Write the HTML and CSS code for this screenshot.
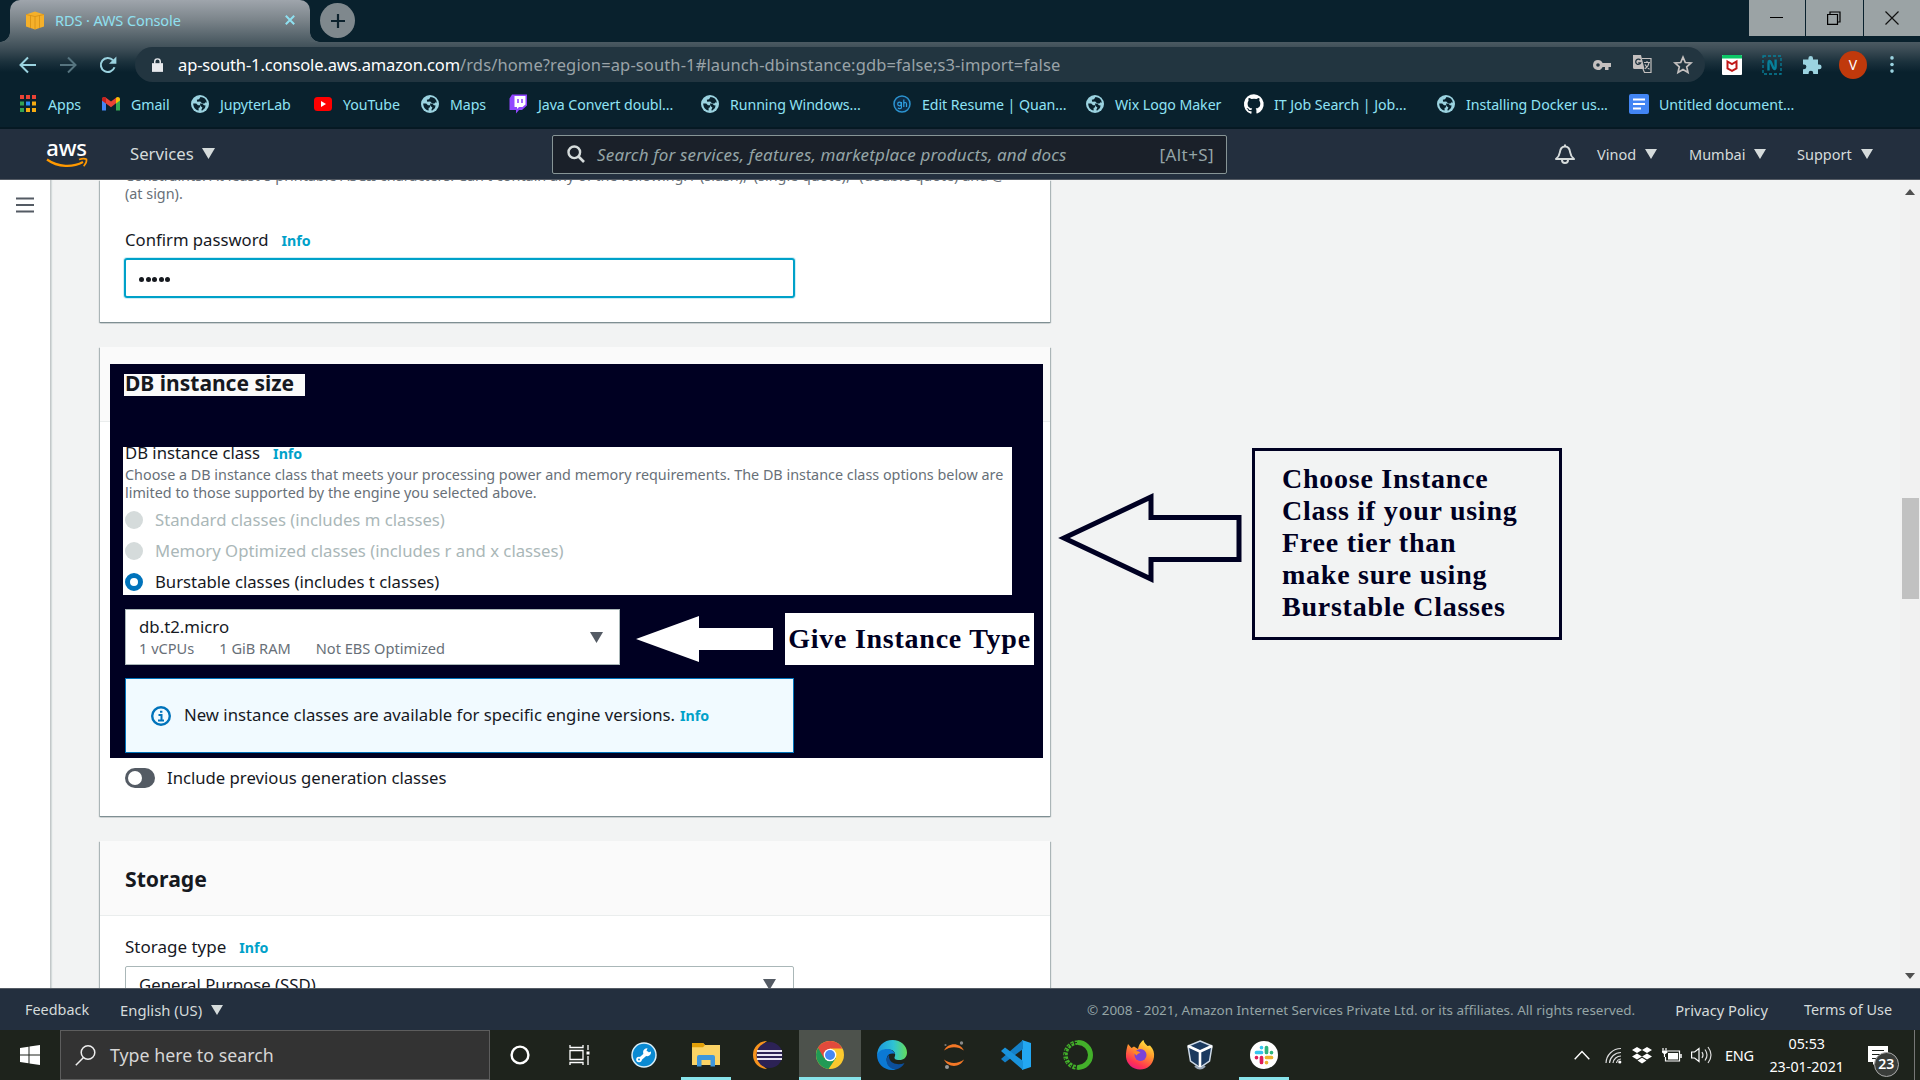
FILE: index.html
```html
<!DOCTYPE html>
<html lang="en">
<head>
<meta charset="utf-8">
<title>RDS · AWS Console</title>
<link rel="stylesheet" href="styles.css">
</head>
<body>
<svg class="defs" width="0" height="0">
  <symbol id="globe" viewBox="0 0 18 18">
    <circle cx="9" cy="9" r="9" fill="#9bd3e0"/>
    <path d="M2.200 8.600h3l1.800 1.600h2v2l-1.400.8v2.600C4.400 15 2.200 12.200 2.200 8.600zM9.500 2.100 8 4.200l-2.200.6.400 2 3-.2 2 1.800h2.200l1.200-1.200 1.300.6A6.900 6.900 0 0 0 9.500 2.100z" fill="#09212d"/>
    <path d="M9 8.600l2.400.2 1.600 1.400 1.600.4-.6 2.400-2.600 2.400-1.200-.2 1.200-2.800-2-1.400z" fill="#09212d"/>
  </symbol>
  <symbol id="caret" viewBox="0 0 12 10"><path d="M0 0h12L6 10z" fill="currentColor"/></symbol>
</svg>

<div class="tabstrip">
  <div class="tab">
    <svg class="tab-icon" viewBox="0 0 18 19"><path d="M0 3.500 9 .5l9 3v12L9 18.500l-9-3z" fill="#f5b02a"/><path d="M0 3.500 9 5.500l9-2M9 5.500v13M4.500 4.500v12.500M13.500 4.500v12.500" stroke="#d58f14" stroke-width=".8" fill="none"/></svg>
    <span class="tab-title">RDS · AWS Console</span>
    <svg class="tab-close" viewBox="0 0 10 10"><path d="M.8.8l8.400 8.400M9.200.8.8 9.200" stroke="#8fe0f0" stroke-width="2"/></svg>
  </div>
  <div class="newtab"><svg width="16" height="16" viewBox="0 0 16 16"><path d="M8 1v14M1 8h14" stroke="#0d222d" stroke-width="2.200"/></svg></div>
  <div class="winbtns">
    <div class="winbtn"><svg width="13" height="13"><path d="M0 5.500h13" stroke="#000" stroke-width="1"/></svg></div>
    <div class="winbtn"><svg width="14" height="14"><path d="M.6 3.500h9.900v9.900H.6zM3 3.500V1h10v10h-2.500" fill="none" stroke="#000" stroke-width="1.200"/></svg></div>
    <div class="winbtn"><svg width="14" height="14"><path d="M.5.5l13 13M13.500.5l-13 13" stroke="#111" stroke-width="1.200"/></svg></div>
  </div>
</div>

<div class="toolbar">
  <svg class="nav" viewBox="0 0 18 18"><path d="M17 9H2M9 1.500 1.500 9 9 16.500" stroke="#9bd3e0" stroke-width="2" fill="none"/></svg>
  <svg class="nav" viewBox="0 0 18 18"><path d="M1 9h15M9 1.500 16.500 9 9 16.500" stroke="#56747f" stroke-width="2" fill="none"/></svg>
  <svg class="nav" viewBox="0 0 18 18"><path d="M15.500 11.200A7 7 0 1 1 14 4.200" stroke="#9bd3e0" stroke-width="2" fill="none"/><path d="M17.400.4V7.800H10z" fill="#9bd3e0"/></svg>
  <div class="omnibox">
    <svg class="lock" viewBox="0 0 12 15"><path d="M0 5.500h12V15H0z" fill="#e8eaed"/><path d="M3 6V3.800a3 3 0 0 1 6 0V6" fill="none" stroke="#e8eaed" stroke-width="1.600"/></svg>
    <span class="host">ap-south-1.console.aws.amazon.com</span><span class="path">/rds/home?region=ap-south-1#launch-dbinstance:gdb=false;s3-import=false</span>
    <svg class="key" viewBox="0 0 18 12"><path fill-rule="evenodd" d="M5 1a5 5 0 1 0 4.600 7H12v3h3.500V8H18V4H9.600A5 5 0 0 0 5 1zm0 3.200a1.800 1.800 0 1 1 0 3.600 1.800 1.800 0 0 1 0-3.600z" fill="#c4c0bf"/></svg>
    <svg class="translate" viewBox="0 0 19 19"><path d="M0 0h8l3.500 14H1.500A1.500 1.500 0 0 1 0 12.500z" fill="#c4c0bf"/><path d="M9 3.500h9v14h-6.500L10 14" fill="none" stroke="#c4c0bf" stroke-width="1.200"/><path d="M11 7.500h6M14 6v1.500M16 7.500c-.5 3-2 5-4 6.200M12 9.500c1 2 2.500 3.500 4.500 4.700" fill="none" stroke="#c4c0bf" stroke-width="1.100"/><path d="M7.400 5.200a2.600 2.600 0 1 0 .3 2.600H5.200" fill="none" stroke="#223540" stroke-width="1.300"/></svg>
    <svg class="star" viewBox="0 0 18 18"><path d="M9 1.200l2.300 5.300 5.700.5-4.300 3.800 1.300 5.700L9 13.500l-5 3 1.300-5.700L1 7l5.700-.5z" fill="none" stroke="#c4c0bf" stroke-width="1.700"/></svg>
  </div>
  <svg class="ext ext-first" viewBox="0 0 20 20"><rect width="20" height="20" rx="1" fill="#fff"/><path d="M0 1a1 1 0 0 1 1-1h18a1 1 0 0 1 1 1v2.500H0z" fill="#0cc767"/><path d="M5.500 6.500 10 9l4.500-2.500v7L10 15.800l-4.500-2.300z" fill="none" stroke="#c01818" stroke-width="2"/></svg>
  <svg class="ext" viewBox="0 0 20 20"><rect x="1" y="1" width="18" height="18" fill="none" stroke="#07809a" stroke-width="1.300" stroke-dasharray="3 2"/><path d="M6.500 15.500V8c0-2.500 1.500-2.500 2.300-1l2.600 6c.8 1.500 2.200 1.500 2.200-1V4.500" fill="none" stroke="#07809a" stroke-width="2.400"/></svg>
  <svg class="ext" viewBox="0 0 20 20"><path d="M1 4.500h5.400V3.200a2.300 2.300 0 1 1 4.600 0v1.300h5v5h1.200a2.400 2.400 0 1 1 0 4.800H16V19h-4.800v-1a2.300 2.300 0 0 0-4.600 0v1H1v-4.800h1a2.400 2.400 0 0 0 0-4.800H1z" fill="#9bd3e0"/></svg>
  <div class="avatar">V</div>
  <svg class="dots" viewBox="0 0 4 18"><circle cx="2" cy="2" r="1.900" fill="#9bd3e0"/><circle cx="2" cy="9" r="1.900" fill="#9bd3e0"/><circle cx="2" cy="16" r="1.900" fill="#9bd3e0"/></svg>
</div>

<div class="bookmarks">
  <div class="bm bm-apps"><svg viewBox="0 0 18 18"><g fill="#ea4335"><path d="M0 0h4v4H0zM6 0h4v4H6zM12 0h4v4h-4z"/></g><path d="M0 6.500h4v4H0zM0 13h4v4H0z" fill="#34a353"/><path d="M6 6.500h4v4H6z" fill="#2c8df5"/><path d="M12 6.500h4v4h-4zM6 13h4v4H6zM12 13h4v4h-4z" fill="#f7ac12"/></svg>Apps</div>
  <div class="bm"><svg viewBox="0 0 18 18"><path d="M0 4v11.500h4V8z" fill="#4285f4"/><path d="M18 4v11.500h-4V8z" fill="#34a853"/><path d="M0 4.500C0 2 2.500 1.500 4 2.700L9 6.500l5-3.800V8.200l-5 4-9-6.700z" fill="#ea4335"/><path d="M14 2.700c1.500-1.200 4-.7 4 1.800v1L14 8.600z" fill="#fbbc04"/><path d="M0 4.500C0 2 2.500 1.500 4 2.700v5.900L0 5.500z" fill="#c5221f"/></svg>Gmail</div>
  <div class="bm"><svg><use href="#globe"/></svg>JupyterLab</div>
  <div class="bm"><svg viewBox="0 0 18 18"><rect y="2" width="18" height="14" rx="3.500" fill="#f00"/><path d="M7 6l5 3-5 3z" fill="#fff"/></svg>YouTube</div>
  <div class="bm"><svg><use href="#globe"/></svg>Maps</div>
  <div class="bm"><svg viewBox="0 0 18 18"><path d="M3-.5h15v11L13 15h-3l-3 3.500V15H.5V3.500z" fill="#9146ff"/><path d="M5.500 1h11v8.500L13.500 12H10l-2 2v-2H5.500z" fill="#fff"/><path d="M9 4v4M13 4v4" stroke="#9146ff" stroke-width="1.600"/></svg>Java Convert doubl...</div>
  <div class="bm"><svg><use href="#globe"/></svg>Running Windows...</div>
  <div class="bm"><svg viewBox="0 0 18 18"><circle cx="9" cy="9" r="8" fill="#0d2b45" stroke="#2b93cf" stroke-width="1.500"/><circle cx="6.500" cy="9" r="1.800" fill="none" stroke="#2f9fe0" stroke-width="1.200"/><path d="M8.400 7v5.500c0 1.500-2.800 1.500-3.300.3M10.800 4.500V12M10.800 9c0-2 2.700-2 2.700 0v3" fill="none" stroke="#2f9fe0" stroke-width="1.200"/></svg>Edit Resume | Quan...</div>
  <div class="bm"><svg><use href="#globe"/></svg>Wix Logo Maker</div>
  <div class="bm wide"><svg viewBox="0 0 20 20"><path d="M10 .2a10 10 0 0 0-3.200 19.500c.5.1.7-.2.7-.5v-2c-2.800.6-3.400-1.200-3.400-1.200-.5-1.200-1.100-1.500-1.100-1.500-.9-.6.1-.6.1-.6 1 .1 1.500 1 1.500 1 .9 1.600 2.400 1.100 3 .9.100-.7.400-1.100.6-1.400-2.200-.3-4.600-1.100-4.600-5 0-1.100.4-2 1-2.700-.1-.3-.4-1.300.1-2.700 0 0 .8-.3 2.800 1a9.600 9.600 0 0 1 5 0c1.900-1.300 2.700-1 2.700-1 .5 1.400.2 2.400.1 2.700.6.700 1 1.600 1 2.700 0 3.900-2.300 4.700-4.600 5 .4.300.7.900.7 1.900v2.800c0 .3.200.6.700.5A10 10 0 0 0 10 .2z" fill="#fff"/></svg>IT Job Search | Job...</div>
  <div class="bm"><svg><use href="#globe"/></svg>Installing Docker us...</div>
  <div class="bm wide"><svg viewBox="0 0 20 20"><rect width="20" height="20" rx="2" fill="#4285f4"/><path d="M4 5.500h12M4 10h12M4 14.500h8" stroke="#fff" stroke-width="2.200"/></svg>Untitled document...</div>
</div>

<header class="aws">
  <div class="logo"><span>aws</span><svg viewBox="0 0 42 10"><path d="M1 1.500C12 9.500 27 9.500 37 4" fill="none" stroke="#f90" stroke-width="2.200"/><path d="M33 1.500c3-1 6-1 7.500-.3.300 2-.8 5-2.800 7" fill="none" stroke="#f90" stroke-width="1.600"/></svg></div>
  <div class="services">Services<svg><use href="#caret"/></svg></div>
  <div class="search">
    <svg viewBox="0 0 18 18"><circle cx="7.300" cy="7.300" r="5.800" fill="none" stroke="#d5dbdb" stroke-width="2.400"/><path d="M11.500 11.500l5.500 5.500" stroke="#d5dbdb" stroke-width="2.600"/></svg>
    <i>Search for services, features, marketplace products, and docs</i>
    <span>[Alt+S]</span>
  </div>
  <svg class="bell" viewBox="0 0 20 20"><path d="M10 0v1.500M1 14.500c3-2.500 3.500-4 3.800-6.500.4-3.500 2.500-6 5.200-6s4.800 2.500 5.200 6c.3 2.500.8 4 3.800 6.500z" fill="none" stroke="#d5dbdb" stroke-width="2" stroke-linejoin="round"/><path d="M7 15.500a3 3 0 0 0 6 0" fill="none" stroke="#d5dbdb" stroke-width="2"/></svg>
  <div class="menu menu-user">Vinod<svg><use href="#caret"/></svg></div>
  <div class="menu menu-region">Mumbai<svg><use href="#caret"/></svg></div>
  <div class="menu">Support<svg><use href="#caret"/></svg></div>
</header>

<main>
  <nav class="side"><svg width="18" height="16"><path d="M0 1.500h18M0 8h18M0 14.500h18" stroke="#545b64" stroke-width="2.200"/></svg></nav>
  <div class="cards">
    <section class="card card-password">
      <p class="hint first">Constraints: At least 8 printable ASCII characters. Can't contain any of the following: / (slash), '(single quote), "(double quote) and @<br>(at sign).</p>
      <div class="label">Confirm password<b class="info">Info</b></div>
      <div class="password"><i></i><i></i><i></i><i></i><i></i></div>
    </section>

    <section class="card card-size">
      <div class="panel">
        <h2 class="panel-title">DB instance size</h2>
        <div class="classes">
          <div class="label">DB instance class<b class="info">Info</b></div>
          <p class="hint">Choose a DB instance class that meets your processing power and memory requirements. The DB instance class options below are<br>limited to those supported by the engine you selected above.</p>
          <div class="radio off"><i></i>Standard classes (includes m classes)</div>
          <div class="radio off"><i></i>Memory Optimized classes (includes r and x classes)</div>
          <div class="radio on"><i></i>Burstable classes (includes t classes)</div>
        </div>
        <div class="type-row">
          <div class="type">
            <div>
              <div class="type-name">db.t2.micro</div>
              <div class="specs"><span>1 vCPUs</span><span>1 GiB RAM</span><span>Not EBS Optimized</span></div>
            </div>
            <svg class="drop"><use href="#caret"/></svg>
          </div>
          <svg class="white-arrow" viewBox="0 0 137 46"><path d="M0 23 63 0v12h74v22H63v12z" fill="#fff"/></svg>
          <div class="type-note">Give Instance Type</div>
        </div>
        <div class="alert">
          <svg width="20" height="20" viewBox="0 0 20 20"><circle cx="10" cy="10" r="8.800" fill="none" stroke="#0073bb" stroke-width="2.400"/><path d="M7.500 9h3v5.500M7 14.500h6M9 5.800h2.400" stroke="#0073bb" stroke-width="2" fill="none"/></svg>
          <span>New instance classes are available for specific engine versions.</span><b class="info">Info</b>
        </div>
      </div>
      <div class="toggle-row"><i class="toggle"></i><span>Include previous generation classes</span></div>
    </section>

    <section class="card card-storage">
      <h2>Storage</h2>
      <div class="storage-body">
        <div class="label">Storage type<b class="info">Info</b></div>
        <div class="storage-select">General Purpose (SSD)<svg class="drop"><use href="#caret"/></svg></div>
      </div>
    </section>
  </div>
  <svg class="outline-arrow" viewBox="0 0 182 92"><path d="M4 46 91 5v20.500h88v42H91V87z" fill="none" stroke="#000022" stroke-width="5"/></svg>
  <div class="callout">Choose Instance<br>Class if your using<br>Free tier than<br>make sure using<br>Burstable Classes</div>
  <div class="scroll"><svg width="10" height="6"><path d="M0 6 5 0l5 6z" fill="#505050"/></svg><div class="thumb"></div><svg width="10" height="6"><path d="M0 0l5 6 5-6z" fill="#505050"/></svg></div>
</main>

<footer>
  <span>Feedback</span><span class="lang">English (US)<svg><use href="#caret"/></svg></span>
  <span class="copy">© 2008 - 2021, Amazon Internet Services Private Ltd. or its affiliates. All rights reserved.</span>
  <span class="privacy">Privacy Policy</span><span>Terms of Use</span>
</footer>

<div class="taskbar">
  <div class="start"><svg width="20" height="20"><path d="M0 3l8.500-1.200v7.700H0zM9.500 1.600 20 0v9.500H9.500zM0 10.500h8.500v7.700L0 17zM9.500 10.500H20V20L9.500 18.400z" fill="#fff"/></svg></div>
  <div class="tsearch"><svg width="21" height="21"><circle cx="13" cy="7.500" r="6.800" fill="none" stroke="#eee" stroke-width="1.500"/><path d="M8.500 12.500.8 20.300" stroke="#eee" stroke-width="1.500"/></svg>Type here to search</div>
  <div class="apps">
    <div class="app"><svg width="20" height="20"><circle cx="10" cy="10" r="8.400" fill="none" stroke="#fff" stroke-width="2.400"/></svg></div>
    <div class="app app-view"><svg width="22" height="20"><path d="M1 0v2.500h13V0M1 20v-2.500h13V20M1 5.500h13v9H1zM19 0v5M19 11v9" fill="none" stroke="#fff" stroke-width="1.300"/><path d="M17.500 6.500h3v3h-3z" fill="#fff"/></svg></div>
    <div class="app"><svg width="26" height="26" viewBox="0 0 26 26"><circle cx="13" cy="13" r="12" fill="#0a8ad2" stroke="#d9eef8" stroke-width="1.500"/><path d="M8 18 16 11" stroke="#fff" stroke-width="3.500" stroke-linecap="round"/><path d="M20 9.500a4 4 0 1 1-3.500-3.300L15.500 9l2 1.500z" fill="#fff"/><circle cx="8" cy="17.500" r="2.800" fill="#fff"/><circle cx="8" cy="17.500" r="1" fill="#0a8ad2"/></svg></div>
    <div class="app open"><svg width="28" height="24"><path d="M0 0h11l2 2h15v20H0z" fill="#fbd365"/><path d="M0 0h11l2 2-2 2.200H0z" fill="#e3a008"/><path d="M5 23.500V14q0-2 2-2h14q2 0 2 2v9.500h-4.500V17h-9v6.500z" fill="#3f97dc"/></svg></div>
    <div class="app"><svg width="30" height="28"><path d="M14 0A14 14 0 0 0 14 28 17 17 0 0 1 14 0z" fill="#f7941e"/><circle cx="16.500" cy="14" r="13" fill="#2c2255"/><path d="M4 10h25M4 14h25M4 18h25" stroke="#e9e6f2" stroke-width="2.200"/></svg></div>
    <div class="app active"><svg width="28" height="28"><circle cx="14" cy="14" r="14" fill="#fbc92e"/><path d="M14 14 2 6.800A14 14 0 0 0 12.500 27.900L20 17z" fill="#219a55"/><path d="M14 14V7.500h12.400A14 14 0 0 0 2 6.800L7.900 17z" fill="#e14a3c"/><circle cx="14" cy="14" r="6.300" fill="#fff"/><circle cx="14" cy="14" r="5" fill="#4588f4"/></svg></div>
    <div class="app"><svg width="30" height="30" viewBox="0 0 30 30"><defs><linearGradient id="eg"><stop stop-color="#1a96dd"/><stop offset=".55" stop-color="#2fc2d4"/><stop offset="1" stop-color="#64dc5a"/></linearGradient></defs><path d="M0 16C0 6 7 0 15.500 0 24 0 30 6 30 12.500c0 5-3.500 7.500-7.500 7.500-4.500 0-6-1.500-4.500-4 1-3-1.500-6.500-6-6.500-6 0-11 3-12 6.500z" fill="url(#eg)"/><path d="M0 15c1.500-4 5.500-6 10-6 4 0 7 2 8 5-7-2-10 4-7.500 9 1.800 3.800 5 6 8.500 6.500C9 32 0 25 0 15z" fill="#0b79d4"/><path d="M11 15.500C7 23 12 29 19 29.500c4-.8 7-3.500 8.500-6.500-6 2.500-13 1-15-4-.5-1.200-.5-2.500-.2-3.500z" fill="#0c4f9c"/></svg></div>
    <div class="app"><svg width="22" height="28"><path d="M1 9.500c4-8.500 16-8.500 20 0-6-4.500-14-4.500-20 0zM1 18.500c4 8.500 16 8.500 20 0-6 4.500-14 4.500-20 0z" fill="#f37726"/><circle cx="18.500" cy="2" r="1.700" fill="#8a8a8a"/><circle cx="2.500" cy="4" r="1.100" fill="#777"/><circle cx="4" cy="26" r="2" fill="#999"/></svg></div>
    <div class="app"><svg width="30" height="30" viewBox="0 0 30 30"><path d="M21 0 30 3v24l-9 3z" fill="#23a7f2"/><path d="M22 0v9L4 22.500l-4-3.500z" fill="#1480c8"/><path d="M22 30v-9L4 7.500 0 11z" fill="#1a93dc"/></svg></div>
    <div class="app"><svg width="30" height="30"><path d="M15 2.500a12.500 12.500 0 0 1 0 25" fill="none" stroke="#43b02a" stroke-width="5"/><path d="M15 2.500a12.500 12.500 0 0 0 0 25" fill="none" stroke="#43b02a" stroke-width="4.500" stroke-dasharray="3 1.200"/><path d="M14 2.500a12 12 0 0 0 0 25" fill="none" stroke="#1e241c" stroke-width="1" stroke-dasharray="2 2.500"/></svg></div>
    <div class="app"><svg width="30" height="30" viewBox="0 0 30 30"><defs><linearGradient id="fg" x1=".8" y1="0" x2=".3" y2="1"><stop stop-color="#fff044"/><stop offset=".4" stop-color="#ff9a2c"/><stop offset=".8" stop-color="#ff3550"/><stop offset="1" stop-color="#e81a80"/></linearGradient></defs><path d="M3 4l3.500 4L9 6.500 13 9c1-5 3.500-7.500 5.500-9 .5 3 2.500 4 4 6l2.500-.5C28.500 9 29.500 13 29 17c-1 8-7 12.500-14 12.500S1.500 24 1 17c-.3-5 .7-9 2-13z" fill="url(#fg)"/><circle cx="15.500" cy="15" r="6" fill="#7a42d8"/><path d="M8 12c3-2 6-1 7.500 1-2 0-3 1-4 2.500z" fill="#ff8a22"/></svg></div>
    <div class="app app-box"><svg width="26" height="30" viewBox="0 0 26 30"><path d="M13 1 25 6l-2.500 15L13 27.500 3.500 21 1 6z" fill="#1b3a5f" stroke="#cdd9e6" stroke-width="1.500"/><path d="M1 6l12 5.500L25 6M13 11.500v16" stroke="#fff" stroke-width="2.600" fill="none"/><path d="M8 26q5 5 10 0" fill="none" stroke="#9aa8b8" stroke-width="2"/></svg></div>
    <div class="app open"><svg width="28" height="28"><circle cx="14" cy="14" r="14" fill="#fff"/><g stroke-width="3.700" stroke-linecap="round"><path d="M11.500 6.500v.1M6.500 11.500h5" stroke="#36c5f0"/><path d="M16.500 6.500v5M21.500 11.500v.1" stroke="#2eb67d"/><path d="M16.500 16.500h5M16.500 21.500v.1" stroke="#ecb22e"/><path d="M11.500 16.500v5M6.500 16.500v.1" stroke="#e01e5a"/></g></svg></div>
  </div>
  <div class="tray">
    <svg width="16" height="10"><path d="M.7 9.300 8 1.500l7.300 7.800" fill="none" stroke="#fff" stroke-width="1.400"/></svg>
    <svg class="wifi" width="17" height="17" viewBox="0 0 17 17"><path d="M1 16A15 15 0 0 1 16 1.500M4.500 16A11.500 11.500 0 0 1 16 5.500M8 16a8 8 0 0 1 8-7M11.500 16a5 5 0 0 1 4.500-4" fill="none" stroke="#ddd" stroke-width="1.200"/><circle cx="14.800" cy="15" r="1.600" fill="#fff"/></svg>
    <svg class="dbx" width="20" height="17" viewBox="0 0 20 17"><path d="M5 0l5 3-5 3-5-3zM15 0l5 3-5 3-5-3zM5 6.500l5 3-5 3-5-3zM15 6.500l5 3-5 3-5-3zM10 10.800l4.500 2.800L10 16.500l-4.500-2.900z" fill="#fff"/></svg>
    <svg class="batt" width="20" height="14"><path d="M5.500 3h12v10h-14V9" fill="none" stroke="#fff" stroke-width="1.200"/><path d="M6 5h10v6.500H6z" fill="#fff"/><path d="M19 6v4" stroke="#fff" stroke-width="1.500"/><path d="M1 0v2.500M4 0v2.500M2.500 5v4" stroke="#fff" stroke-width="1.200"/><path d="M0 2.500h5.500v2l-2 1.500h-1.500L0 4.500z" fill="#fff"/></svg>
    <svg class="vol" width="21" height="18"><path d="M.6 6h3L8 2.500v13L3.600 12h-3z" fill="none" stroke="#fff" stroke-width="1.200"/><path d="M11 6q2 3 0 6M14 3.500q4 5.500 0 11M17 1q6 8 0 16" fill="none" stroke="#ddd" stroke-width="1.200"/></svg>
    <span class="eng">ENG</span>
    <div class="clock"><span>05:53</span><span>23-01-2021</span></div>
    <div class="notif"><svg width="20" height="19"><path d="M0 0h20v16H8l-3 3v-3H0z" fill="#fff"/><path d="M4 4.500h12M4 8.500h12M4 12.500h8" stroke="#1c211c" stroke-width="1.200"/></svg><span class="badge">23</span></div>
  </div>
</div>
</body>
</html>
```
FILE: styles.css
```css
* { box-sizing: border-box; }
body {
  margin: 0;
  width: 1920px;
  height: 1080px;
  overflow: hidden;
  display: flex;
  flex-direction: column;
  font-family: "Noto Sans", "Open Sans", sans-serif;
  background: #09212d;
  color: #16191f;
  white-space: nowrap;
}
svg { display: block; flex: none; overflow: visible; }
.defs { position: absolute; }
h2, p { margin: 0; }

/* browser tabs */
.tabstrip { height: 42px; flex: none; display: flex; padding-left: 10px; align-items: flex-start; }
.tab {
  position: relative;
  width: 300px;
  height: 42px;
  padding: 0 15px 2px 16px;
  display: flex;
  align-items: center;
  border-radius: 10px 10px 0 0;
  background: linear-gradient(#9fa5ac, #7d868c 45%, #4b5a62);
}
.tab::before, .tab::after {
  content: "";
  position: absolute;
  bottom: 0;
  width: 10px;
  height: 10px;
}
.tab::before { left: -10px; background: radial-gradient(circle at 0 0, transparent 9.5px, #4f5e66 10px); }
.tab::after { right: -10px; background: radial-gradient(circle at 100% 0, transparent 9.5px, #4f5e66 10px); }
.tab-icon { width: 18px; height: 19px; }
.tab-title { margin-left: 11px; font-size: 14.500px; letter-spacing: -.1px; color: #8fe0f0; }
.tab-close { width: 10px; height: 10px; margin-left: auto; }
.newtab {
  width: 35px;
  height: 35px;
  margin: 3px 0 0 10px;
  border-radius: 50%;
  display: flex;
  align-items: center;
  justify-content: center;
  background: #7f888d;
}
.winbtns { margin-left: auto; display: flex; gap: 1px; }
.winbtn { width: 56.500px; height: 36px; display: flex; align-items: center; justify-content: center; background: #9ba3a5; }

/* address bar */
.toolbar {
  height: 45px;
  flex: none;
  display: flex;
  align-items: center;
  padding-left: 19px;
  background: linear-gradient(#4b5a62 0, #3f4f58 6px, #1b313c 20px, #09212d 30px);
}
.nav { width: 18px; height: 18px; margin-right: 22px; }
.omnibox {
  width: 1570px;
  height: 35px;
  margin-left: -4px;
  padding: 0 13px 0 17px;
  display: flex;
  align-items: center;
  border-radius: 18px;
  background: #223540;
  font-size: 16.500px;
}
.lock { width: 11px; height: 14px; margin-right: 15px; }
.host { color: #fff; letter-spacing: -.13px; }
.path { color: #9aa3a8; letter-spacing: .12px; }
.key { width: 18px; height: 12px; margin-left: auto; }
.translate { width: 19px; height: 19px; margin-left: 22px; }
.star { width: 18px; height: 18px; margin-left: 22px; }
.ext { width: 20px; height: 20px; margin-right: 20px; }
.ext-first { margin-left: 17px; }
.avatar { width: 28px; height: 28px; margin-left: -3px; border-radius: 50%; background: #c0390b; color: #fff; font-size: 14px; line-height: 28px; text-align: center; }
.dots { width: 4px; height: 17px; margin-left: 23px; }

.bookmarks {
  height: 42px;
  flex: none;
  display: grid;
  grid-template-columns: 82px 89px 123px 107px 88px 192px 192px 193px 158px 193px 192px 200px;
  align-items: center;
  padding: 0 0 6px 20px;
  border-bottom: 2px solid #061923;
  font-size: 14.200px;
  letter-spacing: -.07px;
  color: #8fe3f5;
}
.bm { display: flex; align-items: center; }
.bm svg { width: 18px; height: 18px; margin-right: 11px; }
.bm.bm-apps svg { margin-right: 10px; }
.bm.wide svg { width: 20px; height: 20px; margin-right: 10px; }

/* console header */
.aws {
  height: 51px;
  flex: none;
  display: flex;
  align-items: center;
  padding-left: 45px;
  background: #232f3e;
  border-bottom: 1px solid #545b64;
  color: #d5dbdb;
}
.aws .menu svg { width: 12px; height: 10px; }
.logo { width: 43px; display: flex; flex-direction: column; align-items: center; }
.logo span { height: 18px; font-size: 22px; line-height: 15px; font-weight: 500; letter-spacing: -.2px; color: #fff; }
.logo svg { width: 42px; height: 10px; }
.services { width: 422px; margin-left: 42px; padding-bottom: 1px; display: flex; align-items: center; font-size: 16.700px; }
.services svg { width: 13px; height: 11px; margin-left: 8px; }
.search {
  width: 675px;
  height: 39px;
  padding: 0 12px 0 14px;
  display: flex;
  align-items: center;
  border: 1px solid #879596;
  border-radius: 2px;
  background: #1a2029;
  color: #95a5a6;
  font-size: 17px;
}
.search svg { width: 18px; height: 18px; }
.search i { margin-left: 12px; letter-spacing: .16px; }
.search span { margin-left: auto; letter-spacing: .4px; }
.bell { width: 20px; height: 21px; margin: 0 22px 0 328px; }
.menu { display: flex; align-items: center; gap: 9px; font-size: 14.500px; }
.menu-user { width: 92px; }
.menu-region { width: 108px; }

/* page */
main { height: 808px; flex: none; display: flex; overflow: hidden; background: #f2f3f3; }
.side { width: 51px; flex: none; padding: 17px 0 0 16px; background: #fff; border-right: 1px solid #c3c8c9; box-shadow: 1px 0 1px #d5dbdb; }
.cards { width: 950px; flex: none; margin-left: 49px; display: flex; flex-direction: column; gap: 25px; }
.card { flex: none; background: #fff; box-shadow: 0 1px 1px #7f8f93, 1px 1px 1px rgba(0, 28, 36, .25), -1px 1px 1px rgba(0, 28, 36, .25); }
.card h2 { font-size: 21.200px; font-weight: 700; }
.label { display: flex; align-items: baseline; gap: 13px; font-size: 16.700px; line-height: 24px; }
.info { font-size: 14.200px; font-weight: 700; color: #00a1c9; }
.hint { font-size: 14.370px; line-height: 18px; color: #687078; }
.hint.first { margin: -13px 0 25px; }

.card-password { height: 142px; padding-left: 25px; }
.password { width: 671px; height: 40px; margin: 5px 0 0 -1px; padding: 2px 0 0 13px; display: flex; align-items: center; gap: 1.500px; border: 2px solid #00a1c9; border-radius: 3px; box-shadow: 0 0 0 1px #cfeef6; }
.password i { width: 5px; height: 5px; border-radius: 50%; background: #16191f; }

.card-size { height: 469px; padding: 17px 0 0 10px; background: linear-gradient(#fafafa 74px, #eaeded 74px, #eaeded 75px, #fff 75px); }
.panel { width: 933px; height: 394px; padding: 10px 0 0 13px; background: #000022; }
.panel .panel-title { width: 181px; height: 22px; margin: 0 0 51px 1px; padding-left: 1px; font-size: 21px; line-height: 19px; background: #fafafa; }
.classes { width: 889px; height: 148px; padding-left: 2px; overflow: hidden; background: #fff; }
.classes .label { margin-top: -6px; }
.classes .hint { margin: 0 0 2px; }
.radio { height: 31px; display: flex; align-items: center; gap: 12px; font-size: 16.730px; }
.radio i { width: 18px; height: 18px; border-radius: 50%; background: #d5dbdb; }
.radio.off { color: #aab7b8; }
.radio.on i { background: #fff; border: 5px solid #0073bb; }
.type-row { height: 56px; margin: 14px 0 13px 2px; display: flex; align-items: center; }
.type { width: 495px; height: 56px; padding: 0 16px 0 13px; display: flex; align-items: center; justify-content: space-between; border: 1px solid #aab7b8; background: #fff; }
.type-name { font-size: 16.800px; line-height: 23px; }
.specs { display: flex; gap: 25px; font-size: 14.600px; line-height: 21px; color: #687078; }
.drop { width: 13px; height: 11px; color: #545b64; }
.white-arrow { width: 137px; height: 46px; margin: 3px 12px 0 16px; }
.type-note { width: 249px; height: 52px; margin-top: 4px; line-height: 51px; text-align: center; background: #fff; }
.type-note, .callout { font-family: "Liberation Serif", serif; font-weight: 700; font-size: 28px; letter-spacing: .750px; color: #000022; }
.alert { width: 669px; height: 75px; margin-left: 2px; padding-left: 25px; display: flex; align-items: center; border: 1px solid #0073bb; background: #f1faff; font-size: 16.740px; }
.alert span { margin: 0 5px 0 13px; padding-bottom: 2px; }
.toggle-row { height: 24px; margin: 8px 0 0 15px; display: flex; align-items: center; gap: 12px; font-size: 16.700px; }
.toggle-row span { padding-bottom: 2px; }
.toggle { width: 30px; height: 20px; padding: 3px; border-radius: 10px; background: #545b64; }
.toggle::before { content: ""; display: block; width: 14px; height: 14px; border-radius: 50%; background: #fff; }

.card-storage { height: 200px; }
.card-storage h2 { height: 75px; padding-left: 25px; line-height: 75px; border-bottom: 1px solid #eaeded; background: #fafafa; }
.storage-body { padding: 19px 0 0 25px; }
.storage-body .label { font-size: 17px; }
.storage-select { width: 669px; height: 40px; margin-top: 6px; padding: 0 17px 4px 13px; display: flex; align-items: center; justify-content: space-between; border: 1px solid #aab7b8; border-radius: 2px; font-size: 16.800px; }

.outline-arrow { width: 182px; height: 92px; margin: 312px 0 0 10px; }
.callout { width: 310px; height: 192px; margin: 268px 0 0 10px; padding: 12px 0 0 27px; border: 3px solid #000022; line-height: 32px; }
.scroll { width: 20px; margin-left: auto; padding: 9px 0; display: flex; flex-direction: column; align-items: center; background: #f1f1f1; }
.thumb { width: 17px; height: 101px; margin: 303px 0 auto; background: #c1c1c1; }

/* console footer */
footer { height: 42px; flex: none; display: flex; align-items: center; padding: 0 28px 0 25px; border-top: 1px solid #545b64; background: #232f3e; color: #d5dbdb; font-size: 14.400px; }
.lang { margin-left: 31px; display: flex; align-items: center; font-size: 14.800px; }
.lang svg { width: 12px; height: 10px; margin-left: 9px; }
.copy { margin-left: auto; font-size: 13.450px; color: #95a5a6; }
.privacy { margin: 0 36px 0 40px; font-size: 14.700px; }

/* taskbar */
.taskbar { height: 50px; flex: none; display: flex; background: #1e231c; color: #fff; }
.start { width: 60px; display: flex; align-items: center; justify-content: center; }
.tsearch { width: 430px; padding-left: 14px; display: flex; align-items: center; gap: 14px; background: #333; border: 1px solid #5d5d5d; color: #d6d6d6; font-size: 17.800px; }
.apps { display: flex; margin-left: -1px; }
.app { position: relative; width: 62px; height: 50px; display: flex; align-items: center; justify-content: center; }
.app-view, .app-box { padding-right: 4px; }
.app.active { background: #4d524c; border-bottom: 3px solid #88e3ea; padding-top: 3px; }
.app.open::after { content: ""; position: absolute; left: 6px; right: 6px; bottom: 0; height: 3px; background: #88e3ea; }
.tray { width: 341px; margin-left: auto; margin-right: 5px; display: flex; align-items: center; border-right: 1px solid #777; }
.wifi { margin-left: 15px; }
.dbx { margin-left: 10px; }
.batt { margin-left: 10px; }
.vol { margin-left: 9px; }
.eng { margin-left: 13px; font-size: 14.500px; letter-spacing: -.3px; }
.clock { width: 76px; margin-left: 15px; display: flex; flex-direction: column; align-items: center; font-size: 14.300px; line-height: 23px; }
.notif { position: relative; margin-left: 23px; }
.badge { position: absolute; left: 6px; top: 6px; width: 25px; height: 25px; border-radius: 50%; border: 1px solid #aaa; background: #3a3d3a; font-size: 14px; font-weight: 600; line-height: 22px; text-align: center; }
```
